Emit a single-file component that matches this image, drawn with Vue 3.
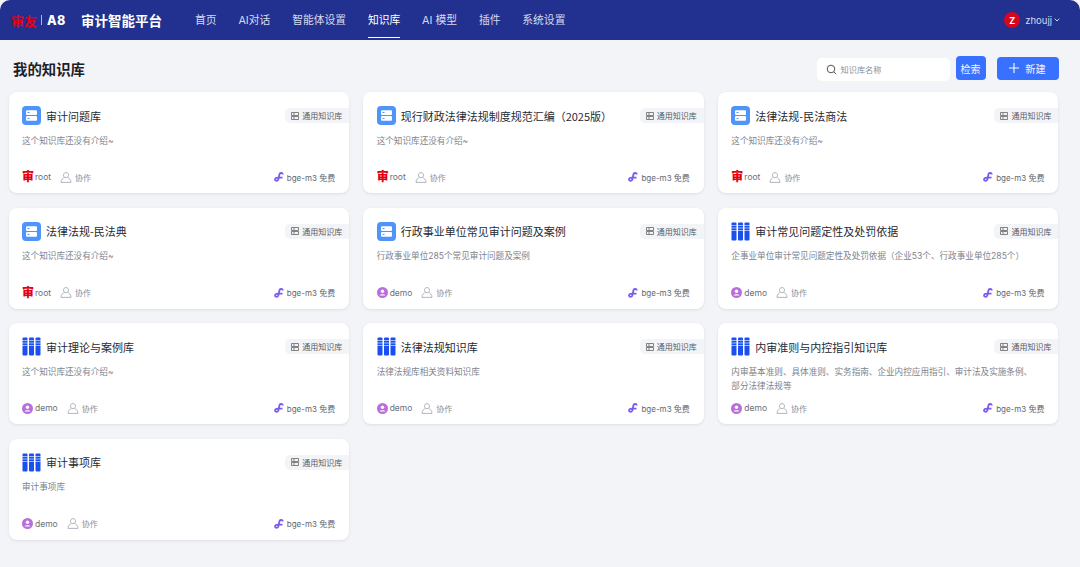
<script setup>
const nav = ['首页', 'AI对话', '智能体设置', '知识库', 'AI 模型', '插件', '系统设置']
const none = '这个知识库还没有介绍~'
const cards = [
  { t: '审计问题库', d: none, i: 'db', o: 'root' },
  { t: '现行财政法律法规制度规范汇编（2025版）', d: none, i: 'db', o: 'root' },
  { t: '法律法规-民法商法', d: none, i: 'db', o: 'root' },
  { t: '法律法规-民法典', d: none, i: 'db', o: 'root' },
  { t: '行政事业单位常见审计问题及案例', d: '行政事业单位285个常见审计问题及案例', i: 'db', o: 'demo' },
  { t: '审计常见问题定性及处罚依据', d: '企事业单位审计常见问题定性及处罚依据（企业53个、行政事业单位285个）', i: 'bk', o: 'demo' },
  { t: '审计理论与案例库', d: none, i: 'bk', o: 'demo' },
  { t: '法律法规知识库', d: '法律法规库相关资料知识库', i: 'bk', o: 'demo' },
  { t: '内审准则与内控指引知识库', d: '内审基本准则、具体准则、实务指南、企业内控应用指引、审计法及实施条例、部分法律法规等', i: 'bk', o: 'demo' },
  { t: '审计事项库', d: '审计事项库', i: 'bk', o: 'demo' }
]
</script>

<template>
  <div class="page">
    <header class="top">
      <div class="logo"><span class="red">审友</span><i class="sep"></i><span class="a8">A8</span></div>
      <div class="brand">审计智能平台</div>
      <nav class="nav">
        <a v-for="n in nav" :key="n" :class="{ on: n === '知识库' }">{{ n }}</a>
      </nav>
      <div class="user">
        <span class="ava">Z</span><span class="uname">zhoujj</span>
        <svg width="6" height="4" viewBox="0 0 6 4"><path d="M.7.7L3 3 5.300.7" fill="none" stroke="#d5d9ee" stroke-width="1"/></svg>
      </div>
    </header>

    <div class="bar">
      <h1>我的知识库</h1>
      <div class="search">
        <svg width="11" height="11" viewBox="0 0 11 11"><circle cx="5" cy="5" r="3.8" fill="none" stroke="#555" stroke-width="1"/><path d="M8 8l2.2 2.2" stroke="#555" stroke-width="1"/></svg>
        <span>知识库名称</span>
      </div>
      <button class="btn find">检索</button>
      <button class="btn add">
        <svg width="10" height="10" viewBox="0 0 10 10"><path d="M5 0v10M0 5h10" stroke="#fff" stroke-width="1.1"/></svg>
        新建
      </button>
    </div>

    <main class="grid">
      <article v-for="c in cards" :key="c.t" class="card">
        <div class="head">
          <svg v-if="c.i === 'db'" class="ic" width="19" height="19" viewBox="0 0 19 19">
            <rect width="19" height="19" rx="4" fill="#4f94fb"/>
            <rect x="4" y="4.200" width="11" height="4.800" rx="1" fill="#fff"/>
            <rect x="4" y="10" width="11" height="4.800" rx="1" fill="#fff"/>
            <rect x="5.500" y="6" width="2" height="1" fill="#4f94fb"/>
            <rect x="5.500" y="11.900" width="2" height="1" fill="#4f94fb"/>
          </svg>
          <svg v-else class="ic" width="19" height="19" viewBox="0 0 19 19">
            <g fill="#1a4ff0">
              <rect x="0.500" y="0.500" width="5" height="18" rx="1"/>
              <rect x="7" y="0.500" width="5" height="18" rx="1"/>
              <rect x="13.500" y="0.500" width="5" height="18" rx="1"/>
            </g>
            <path d="M0 3.500h19M0 6h19M0 8.500h19" stroke="#fff" stroke-width=".7" opacity=".85"/>
          </svg>
          <h2>{{ c.t }}</h2>
          <span class="tag">
            <svg width="8" height="8" viewBox="0 0 8 8"><path d="M.5.500h7v3h-7zM.5 4.500h7v3h-7zM2 2h2M2 6h2" fill="none" stroke="#666" stroke-width=".8"/></svg>
            通用知识库
          </span>
        </div>
        <p class="desc">{{ c.d }}</p>
        <div class="foot">
          <span v-if="c.o === 'root'" class="seal">审</span>
          <svg v-else class="dm" width="11" height="11" viewBox="0 0 11 11">
            <circle cx="5.500" cy="5.500" r="5.500" fill="#b86fdc"/>
            <circle cx="5.500" cy="4.200" r="1.700" fill="#fff"/>
            <path d="M2.600 8.400c.5-1.600 5.300-1.600 5.800 0z" fill="#fff"/>
          </svg>
          <span class="owner">{{ c.o }}</span>
          <span class="co">
            <svg width="12" height="11" viewBox="0 0 12 11"><path d="M6 .6c1.600 0 2.500 1.100 2.500 2.500S7.600 5.700 6 5.700 3.500 4.500 3.500 3.100 4.400.6 6 .6zM1 10.400c0-3 2-4.400 3.300-4.900M11 10.400c0-3-2-4.400-3.300-4.900M1 10.400h10" fill="none" stroke="#a8adb8" stroke-width=".9"/></svg>
            协作
          </span>
          <span class="model">
            <svg width="10" height="10" viewBox="0 0 10 10"><path d="M8.800 2.400C8.800.8 6.400.4 5.500 2L4.300 7.700C3.500 9.500 1 9.200 1 7.600 1 6.300 2.200 5.600 4 5.600h4.500" fill="none" stroke="#7c5cf0" stroke-width="1.800"/></svg>
            bge-m3 免费
          </span>
        </div>
      </article>
    </main>
  </div>
</template>

<style>
html, body { margin: 0; background: #f3f4f7; }
</style>

<style scoped>
.page {
  width: 1080px;
  height: 567px;
  overflow: hidden;
  background: #f3f4f7;
  font-family: "Inter", "Noto Sans CJK SC", "Liberation Sans", sans-serif;
}
.top {
  height: 40px;
  background: #223190;
  border-radius: 10px 10px 0 0;
  display: flex;
  align-items: center;
  color: #fff;
  box-sizing: border-box;
  padding-left: 11px;
}
.logo { display: flex; align-items: center; width: 70px; }
.red { color: #e60012; font-size: 13px; font-weight: 700; }
.sep { width: 1px; height: 10px; background: #aeb5dc; margin: 0 5px 0 4px; }
.a8 { font-size: 12.500px; font-weight: 800; letter-spacing: .3px; }
.brand { font-size: 13.500px; font-weight: 700; margin-right: 33px; width: 81px; }
.nav { display: flex; gap: 21.800px; height: 40px; }
.nav a {
  font-size: 10.800px;
  line-height: 41px;
  color: #d5d9ee;
  height: 38px;
  box-sizing: border-box;
}
.nav a.on { color: #fff; border-bottom: 1.500px solid #fff; }
.user {
  margin-left: auto;
  margin-right: 20px;
  display: flex;
  align-items: center;
  gap: 2px;
  font-size: 9.500px;
  color: #d5d9ee;
}
.ava {
  width: 16px; height: 16px; border-radius: 50%;
  background: #d4071f; color: #fff;
  font-size: 9px; font-weight: 700;
  display: flex; align-items: center; justify-content: center;
  margin-right: 3px;
}
.bar {
  height: 52px;
  display: flex;
  align-items: center;
  padding: 4px 21.500px 0 13px;
  box-sizing: border-box;
}
h1 { font-size: 14.400px; font-weight: 700; color: #1d2129; margin: 0 auto 0 0; }
.search {
  width: 133px; height: 23px;
  background: #fff;
  border-radius: 5px;
  display: flex; align-items: center; gap: 4px;
  padding-left: 9px;
  box-sizing: border-box;
  font-size: 8.200px;
  color: #8a8f99;
  margin: 2px 6px 0 0;
}
.btn {
  border: 0;
  background: #3870ff;
  color: #f2f5ff;
  border-radius: 4px;
  font-family: inherit;
  padding: 0;
  display: flex; align-items: center; justify-content: center;
}
.find { width: 30px; height: 24px; font-size: 10px; margin-right: 11px; }
.add { width: 62px; height: 23px; font-size: 10.200px; gap: 6px; }
.grid {
  display: grid;
  grid-template-columns: repeat(3, 1fr);
  grid-auto-rows: 101px;
  column-gap: 14px;
  row-gap: 14.500px;
  padding: 0 21.500px 0 8.500px;
}
.card {
  background: #fff;
  border-radius: 8px;
  box-shadow: 0 1px 3px rgba(30, 40, 80, .1);
  padding: 14px 14px 0 13.500px;
  display: flex;
  flex-direction: column;
  position: relative;
  box-sizing: border-box;
  height: 101px;
}
.head { display: flex; align-items: center; height: 19px; }
.ic { flex: none; margin-right: 5px; }
h2 {
  font-family: "Noto Sans CJK SC", "Noto Sans", sans-serif;
  font-size: 11px;
  font-weight: 400;
  color: #262a33;
  margin: 0;
  white-space: nowrap;
}
.tag {
  position: absolute;
  right: 0;
  top: 16px;
  height: 15px;
  width: 64px;
  background: #f3f4f7;
  border-radius: 5px 0 0 5px;
  display: flex;
  align-items: center;
  gap: 3px;
  padding-left: 6px;
  box-sizing: border-box;
  font-size: 8px;
  color: #555b66;
  white-space: nowrap;
}
.desc {
  margin: 8.500px 0 0;
  font-size: 8.600px;
  line-height: 14.500px;
  color: #7d838e;
  height: 29px;
  width: 302px;
}
.foot {
  position: absolute;
  left: 13.500px;
  right: 14px;
  top: 78px;
  height: 14px;
  display: flex;
  align-items: center;
  font-size: 8.500px;
  color: #6b7079;
}
.seal { color: #e60012; font-size: 12px; font-weight: 900; line-height: 14px; width: 12px; margin-right: 1px; }
.dm { margin-right: 2px; }
.owner { margin-right: 9px; font-size: 8.500px; }
.co { display: flex; align-items: center; gap: 3px; color: #8a8f99; font-size: 8px; }
.model { margin-left: auto; display: flex; align-items: center; gap: 3px; font-size: 8px; color: #62676f; }
</style>
